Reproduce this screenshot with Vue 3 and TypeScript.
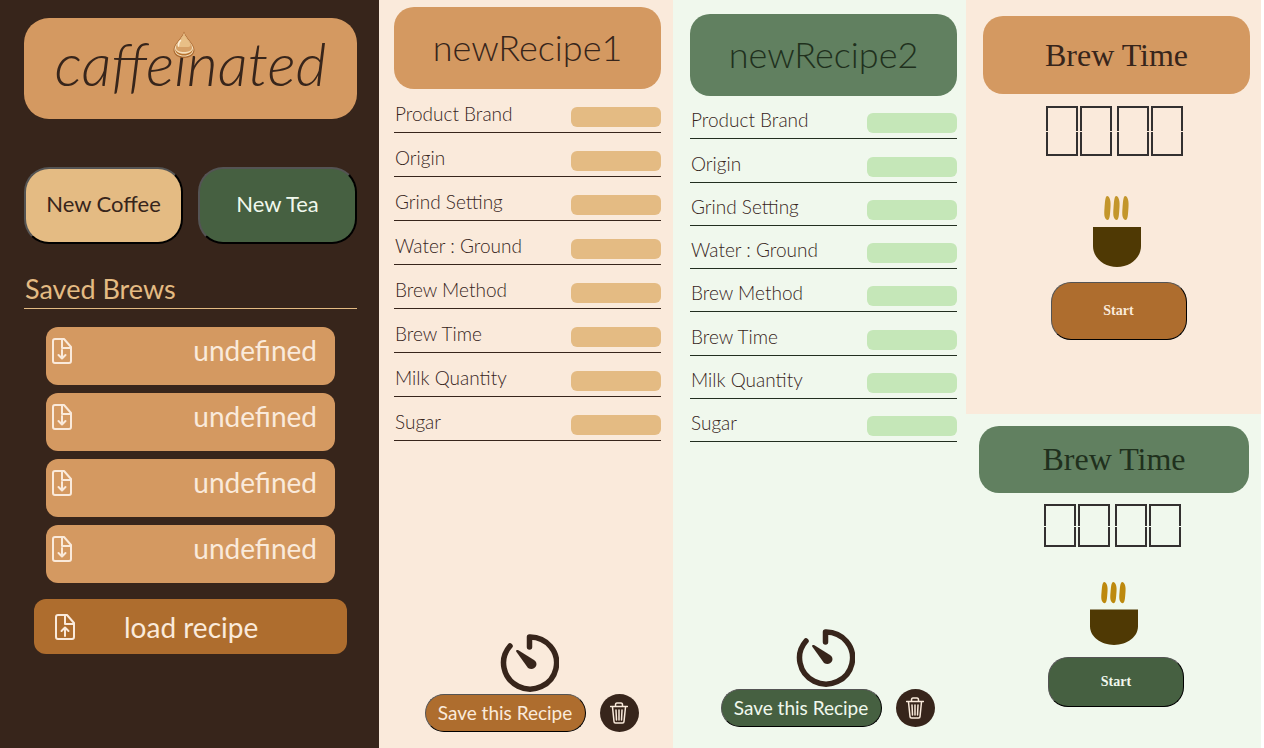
<script setup lang="ts">
import { reactive } from 'vue'

interface Recipe {
  id: string
  theme: 'coffee' | 'tea'
  name: string
  values: Record<string, string>
}

const fields: string[] = [
  'Product Brand',
  'Origin',
  'Grind Setting',
  'Water : Ground',
  'Brew Method',
  'Brew Time',
  'Milk Quantity',
  'Sugar',
]

const blank = (): Record<string, string> =>
  Object.fromEntries(fields.map((field) => [field, '']))

const recipes = reactive<Recipe[]>([
  { id: 'recipe-1', theme: 'coffee', name: 'newRecipe1', values: blank() },
  { id: 'recipe-2', theme: 'tea', name: 'newRecipe2', values: blank() },
])

const savedBrews: string[] = ['undefined', 'undefined', 'undefined', 'undefined']
const timers: Array<'coffee' | 'tea'> = ['coffee', 'tea']
</script>

<template>
  <main class="app">
    <aside class="sidebar">
      <h1 class="logo">
        <span>caffe<span class="logo-i">i<svg class="drop" viewBox="0 0 22 28" aria-hidden="true">
          <path d="M11 0.500C9 7 0.500 13 0.500 19C0.500 24 5.500 27 11 27S21.500 24 21.500 19C21.500 13 13 7 11 0.500Z" fill="#a9682f" />
          <path d="M11 2C9 8 1.500 13 1.500 18.500C1.500 23 6 25.500 11 25.500S20.500 23 20.500 18.500C20.500 13 13 8 11 2Z" fill="#f6e0bd" />
          <path d="M2 17.500C4 24.500 18 24.500 20 17.500C20 22 16 24.500 11 24.500S2 22 2 17.500Z" fill="#b8732f" />
          <path d="M11 2C9 8 3 12 3 16.500C3 20 7 21 11 21S19 20 19 16.500C19 12 13 8 11 2Z" fill="#d6a066" />
          <path d="M11 2.500C9 8 4.500 11 4.500 14C4.500 16.500 8 16 11 16S17.500 16.500 17.500 14C17.500 11 13 8 11 2.500Z" fill="#e8bf86" />
          <path d="M7.500 9.500C5.500 11.500 5 13 5.500 15" fill="none" stroke="#fdf0d8" stroke-width="1.5" stroke-linecap="round" />
        </svg></span>nated</span>
      </h1>

      <div class="new-buttons">
        <button type="button" class="new-button coffee">New Coffee</button>
        <button type="button" class="new-button tea">New Tea</button>
      </div>

      <h2 class="saved-title">Saved Brews</h2>
      <div class="saved-list">
        <button v-for="(brew, index) in savedBrews" :key="index" type="button" class="saved-item">
          <svg class="file-icon" viewBox="0 0 20 26" aria-hidden="true">
            <path d="M12 1H3Q1 1 1 3V23Q1 25 3 25H17Q19 25 19 23V9L12 1ZM10 1V10H19M10 12V20M6.500 17L10 20.500L13.500 17" />
          </svg>
          <span>{{ brew }}</span>
        </button>
      </div>
      <button type="button" class="load-button">
        <svg class="file-icon" viewBox="0 0 20 26" aria-hidden="true">
          <path d="M12 1H3Q1 1 1 3V23Q1 25 3 25H17Q19 25 19 23V9L12 1ZM10 1V10H19M10 22V14M6.500 17L10 13.500L13.500 17" />
        </svg>
        <span>load recipe</span>
      </button>
    </aside>

    <section v-for="recipe in recipes" :key="recipe.id" class="recipe" :class="recipe.theme">
      <h2 class="recipe-title">{{ recipe.name }}</h2>
      <form class="fields" @submit.prevent>
        <div v-for="(field, index) in fields" :key="field" class="field">
          <label :for="`${recipe.id}-${index}`">{{ field }}</label>
          <input :id="`${recipe.id}-${index}`" v-model="recipe.values[field]" type="text" />
        </div>
      </form>
      <div class="recipe-footer">
        <button type="button" class="timer-button" aria-label="Open timer">
          <svg viewBox="0 0 59 58" aria-hidden="true">
            <path d="M10 12A26.500 26 0 1 0 29.500 3V13" fill="none" stroke="#37251b" stroke-width="5.500" stroke-linecap="round" stroke-linejoin="round" />
            <path d="M16 17Q16 15.500 18 16L34 26C40 30 34 38 28 34L16.500 18Z" fill="#37251b" />
          </svg>
        </button>
        <div class="actions">
          <button type="button" class="save-button">Save this Recipe</button>
          <button type="button" class="delete-button" aria-label="Delete recipe">
            <svg viewBox="0 0 18 22" aria-hidden="true">
              <path d="M0.500 4.500H17.500M5.500 4V3Q5.500 1 7 1H11Q12.500 1 12.500 3V4M2.500 5L4 19.500Q4 21 5.500 21H12.500Q14 21 14 19.500L15.500 5M6 8L6.500 18M9 8V18M12 8L11.500 18" />
            </svg>
          </button>
        </div>
      </div>
    </section>

    <div class="timers">
      <section v-for="theme in timers" :key="theme" class="timer" :class="theme">
        <h2 class="timer-title">Brew Time</h2>
        <div class="digits">
          <span v-for="n in 4" :key="n" class="digit"></span>
        </div>
        <svg class="cup" viewBox="0 0 48 72" preserveAspectRatio="none" aria-hidden="true">
          <g class="steam">
            <path d="M14 1C17 1 18 7 17.500 12C17 19 17 25 14.500 25C11 24 11 19 11.500 13C12 8 12 2 14 1Z" />
            <path d="M23 1C26 1 27 7 26.500 12C26 19 26 25 23.500 25C20 24 20 19 20.500 13C21 8 21 2 23 1Z" />
            <path d="M32 1C35 1 36 7 35.500 12C35 19 35 25 32.500 25C29 24 29 19 29.500 13C30 8 30 2 32 1Z" />
          </g>
          <path d="M0 32H48V51C48 63 37 72 24 72S0 63 0 51Z" fill="#4f3904" />
        </svg>
        <button type="button" class="start-button">Start</button>
      </section>
    </div>
  </main>
</template>

<style>
body {
  margin: 0;
  background: #ffffff;
}
</style>

<style scoped>
.app {
  --dark: #37251b;
  --cream: #faeadb;
  display: grid;
  grid-template-columns: 379fr 294fr 293fr 295fr;
  min-height: 100vh;
  padding-right: 3px;
  box-sizing: border-box;
  font-family: Lato, "Open Sans", sans-serif;
  color: var(--dark);
}

.app * {
  box-sizing: border-box;
}

h1,
h2 {
  margin: 0;
  font-weight: 400;
}

button {
  font-family: inherit;
  padding: 0;
  cursor: pointer;
}

.coffee {
  --page: #faeadb;
  --card: #d49961;
  --card-text: #37251b;
  --action: #ae6d2e;
  --action-text: #faeadb;
  --input: #e4bb83;
  --line: #37251b;
  --steam: #c3962b;
}

.tea {
  --page: #f0f8ed;
  --card: #618060;
  --card-text: #20301d;
  --action: #466041;
  --action-text: #f0f8ed;
  --input: #c5e7b8;
  --line: #222e20;
  --steam: #bd890e;
}

.sidebar {
  display: flex;
  flex-direction: column;
  padding: 18px 22px 24px 24px;
  background: var(--dark);
}

.logo {
  display: flex;
  align-items: center;
  justify-content: center;
  height: 101px;
  padding-bottom: 12px;
  border-radius: 25px;
  background: #d49961;
  font-size: 60px;
  font-style: italic;
  font-weight: 300;
  line-height: 64px;
}

.logo-i {
  position: relative;
}

.drop {
  position: absolute;
  left: -1px;
  top: 4px;
  width: 22px;
  height: 28px;
}

.new-buttons {
  display: grid;
  grid-template-columns: 1fr 1fr;
  gap: 15px;
  margin-top: 48px;
}

.new-button {
  height: 77px;
  padding-bottom: 4px;
  border: 2px outset #000000;
  border-radius: 25px;
  font-size: 22px;
}

.new-button.coffee {
  background: #e4bb83;
  color: var(--dark);
}

.new-button.tea {
  background: var(--action);
  color: var(--action-text);
}

.saved-title {
  margin-top: 28px;
  height: 37px;
  padding-left: 1px;
  border-bottom: 1px solid #e4bb83;
  color: #e4bb83;
  font-size: 27px;
  line-height: 33px;
}

.saved-list {
  display: grid;
  gap: 8px;
  margin: 18px 22px 0;
}

.saved-item {
  display: flex;
  align-items: flex-start;
  justify-content: space-between;
  height: 58px;
  padding: 7px 18px 0 6px;
  border: 0;
  border-radius: 12px;
  background: #d49961;
  color: var(--cream);
  font-size: 28px;
  line-height: 32px;
}

.file-icon {
  width: 20px;
  height: 26px;
  fill: none;
  stroke: var(--cream);
  stroke-width: 2;
  stroke-linecap: round;
  stroke-linejoin: round;
}

.saved-item .file-icon {
  margin-top: 4px;
}

.load-button {
  display: flex;
  align-items: center;
  gap: 49px;
  height: 55px;
  margin: 16px 10px 0;
  padding-left: 21px;
  border: 0;
  border-radius: 12px;
  background: #ae6d2e;
  color: var(--cream);
  font-size: 28px;
}

.recipe {
  display: flex;
  flex-direction: column;
  padding: 7px 12px 16px 15px;
  background: var(--page);
}

.recipe.tea {
  padding: 14px 9px 21px 17px;
}

.recipe-title {
  height: 82px;
  border-radius: 20px;
  background: var(--card);
  color: var(--card-text);
  font-size: 36px;
  font-weight: 300;
  line-height: 80px;
  text-align: center;
}

.fields {
  display: grid;
  grid-template-rows: repeat(8, 1fr);
  height: 352px;
}

.recipe.tea .fields {
  height: 346px;
}

.field {
  display: flex;
  align-items: flex-end;
  justify-content: space-between;
  padding-bottom: 5px;
  border-bottom: 1px solid var(--line);
}

.field label {
  padding-left: 1px;
  font-size: 19px;
  font-weight: 300;
  line-height: 26px;
}

.field input {
  width: 90px;
  height: 20px;
  padding: 0 6px;
  border: 0;
  border-radius: 6px;
  background: var(--input);
  font: inherit;
  font-size: 14px;
}

.recipe-footer {
  display: flex;
  flex-direction: column;
  align-items: center;
  gap: 2px;
  margin-top: auto;
}

.timer-button {
  display: block;
  margin-left: 3px;
  border: 0;
  background: none;
}

.timer-button svg {
  display: block;
  width: 59px;
  height: 58px;
}

.actions {
  display: flex;
  gap: 14px;
  margin-left: 8px;
}

.save-button {
  width: 161px;
  height: 38px;
  padding-bottom: 2px;
  border: 1px outset #000000;
  border-radius: 19px;
  background: var(--action);
  color: var(--action-text);
  font-size: 19px;
}

.delete-button {
  display: flex;
  align-items: center;
  justify-content: center;
  width: 39px;
  height: 38px;
  border: 0;
  border-radius: 50%;
  background: var(--dark);
}

.delete-button svg {
  width: 18px;
  height: 22px;
  fill: none;
  stroke: var(--cream);
  stroke-width: 1.5;
  stroke-linecap: round;
}

.timers {
  display: grid;
  grid-template-rows: 414fr 334fr;
  font-family: "Liberation Serif", serif;
}

.timer {
  display: flex;
  flex-direction: column;
  align-items: center;
  padding: 16px 11px 0 17px;
  background: var(--page);
}

.timer-title {
  align-self: stretch;
  height: 78px;
  border-radius: 20px;
  background: var(--card);
  color: var(--card-text);
  font-size: 32px;
  line-height: 78px;
  text-align: center;
}

.digits {
  display: flex;
  gap: 2px;
  height: 50px;
  margin-top: 12px;
  margin-right: 4px;
}

.digit {
  position: relative;
  width: 32px;
  border: 2px solid #333030;
}

.digit:nth-child(3) {
  margin-left: 3px;
}

.digit::after {
  content: "";
  position: absolute;
  top: 50%;
  left: -2px;
  right: -2px;
  height: 1px;
  background: var(--page);
}

.cup {
  width: 48px;
  height: 72px;
  margin-top: 39px;
}

.steam {
  fill: var(--steam);
}

.start-button {
  width: 136px;
  height: 58px;
  margin-top: 15px;
  margin-left: 4px;
  border: 1px outset #000000;
  border-radius: 20px;
  background: var(--action);
  color: var(--action-text);
  font-size: 14px;
  font-weight: 700;
}

.timer.tea {
  padding: 12px 12px 0 13px;
}

.timer.tea .timer-title {
  height: 67px;
  line-height: 67px;
}

.timer.tea .digits {
  height: 43px;
  margin-top: 11px;
}

.timer.tea .cup {
  height: 64px;
  margin-top: 34px;
}

.timer.tea .start-button {
  height: 50px;
  margin-top: 12px;
}
</style>
